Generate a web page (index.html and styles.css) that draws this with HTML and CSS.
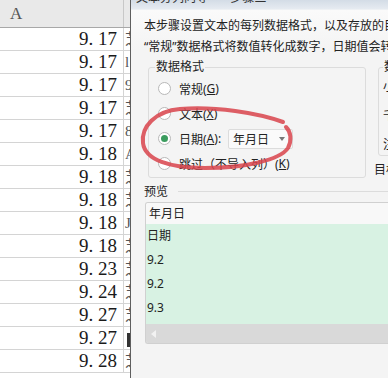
FILE: index.html
```html
<!DOCTYPE html>
<html lang="zh-CN">

<head>
    <meta charset="UTF-8">
    <meta name="viewport" content="width=device-width, initial-scale=1.0">
    <title>文本分列向导</title>
    <link rel="stylesheet" href="styles.css">
</head>

<body>
    <div class="screen">
        <div class="sheet">
            <div class="head">
                <div class="colA">A</div>
                <div class="colB"></div>
            </div>
            <div class="row"><div class="cellA">9. 17</div><div class="cellB">芝</div></div>
            <div class="row"><div class="cellA">9. 17</div><div class="cellB">l</div></div>
            <div class="row"><div class="cellA">9. 17</div><div class="cellB">9</div></div>
            <div class="row"><div class="cellA">9. 17</div><div class="cellB">芝</div></div>
            <div class="row"><div class="cellA">9. 17</div><div class="cellB">8</div></div>
            <div class="row"><div class="cellA">9. 18</div><div class="cellB">A</div></div>
            <div class="row"><div class="cellA">9. 18</div><div class="cellB">芝</div></div>
            <div class="row"><div class="cellA">9. 18</div><div class="cellB">芝</div></div>
            <div class="row"><div class="cellA">9. 18</div><div class="cellB">J</div></div>
            <div class="row"><div class="cellA">9. 18</div><div class="cellB">芝</div></div>
            <div class="row"><div class="cellA">9. 23</div><div class="cellB">芝</div></div>
            <div class="row"><div class="cellA">9. 24</div><div class="cellB">芝</div></div>
            <div class="row"><div class="cellA">9. 27</div><div class="cellB">芝</div></div>
            <div class="row"><div class="cellA">9. 27</div><div class="cellB"><span class="bar"></span></div></div>
            <div class="row"><div class="cellA">9. 28</div><div class="cellB">芝</div></div>
        </div>

        <div class="dialog">
            <div class="titlebar"><span>文本分列向导   -   步骤三</span></div>
            <div class="content">
                <p class="intro">本步骤设置文本的每列数据格式，以及存放的目标区域。<br>“常规”数据格式将数值转化成数字，日期值会转换成日期，其余数据则转换成文本。</p>

                <div class="groups">
                    <fieldset class="format">
                        <legend>数据格式</legend>
                        <div class="opt"><span class="radio"></span>常规(<u>G</u>)</div>
                        <div class="opt"><span class="radio"></span>文本(<u>X</u>)</div>
                        <div class="opt"><span class="radio on"></span>日期(<u>A</u>):
                            <span class="select">年月日<span class="caret"></span></span>
                        </div>
                        <div class="opt"><span class="radio"></span>跳过（不导入列）(<u>K</u>)</div>
                    </fieldset>
                    <div class="side">
                        <fieldset class="extra">
                            <legend>数字分隔符</legend>
                            <div class="item">小数分隔符</div>
                            <div class="item">千位分隔符</div>
                            <div class="item">注意</div>
                        </fieldset>
                        <div class="target">目标区域(<u>E</u>)</div>
                    </div>
                </div>

                <div class="preview-label">预览</div>
                <div class="preview">
                    <div class="ph">年月日</div>
                    <div class="rows">
                        <div class="pr">日期</div>
                        <div class="pr">9.2</div>
                        <div class="pr">9.2</div>
                        <div class="pr">9.3</div>
                    </div>
                    <div class="scroll"><span class="arrow"></span></div>
                </div>
            </div>
        </div>

        <!-- hand drawn red circle over the dialog -->
        <svg class="mark" width="388" height="378" viewBox="0 0 388 378">
            <path d="M283,122 C258,113 215,106 180,109 C155,111 141,127 143,143 C145,160 170,168 205,168 C245,168 280,160 288,148 C292,140 291,132 286,127"
                fill="none" stroke="#d8434b" stroke-width="4" stroke-linecap="round" opacity="0.85" />
        </svg>
    </div>
</body>

</html>
```

FILE: styles.css
```css
*{
    margin: 0;
    padding: 0;
    box-sizing: border-box;
}
body{
    width: 388px;
    height: 378px;
    overflow: hidden;
    background: #fff;
}
.screen{
    position: relative;
    display: flex;
    width: 388px;
    height: 378px;
    overflow: hidden;
}

/* spreadsheet */
.sheet{
    width: 130px;
    flex: none;
    background: #fff;
}
.head{
    display: flex;
    height: 28px;
    background: #e9e9e9;
    border-bottom: 1px solid #a8a8a8;
}
.colA{
    width: 124px;
    border-right: 1px solid #c8c8c8;
    padding-left: 10px;
    font-family: "Liberation Serif", serif;
    font-size: 17px;
    line-height: 27px;
    color: #555;
}
.row{
    display: flex;
    height: 23px;
    border-bottom: 1px solid #d4d4d4;
}
.cellA{
    width: 124px;
    border-right: 1px solid #d4d4d4;
    padding-right: 6px;
    text-align: right;
    font-family: "Liberation Serif", serif;
    font-size: 19px;
    line-height: 22px;
    color: #1a1a1a;
}
.cellB{
    width: 6px;
    overflow: hidden;
    padding-left: 1px;
    font-family: "Liberation Serif", "Noto Sans CJK SC", serif;
    font-size: 15px;
    line-height: 22px;
    color: #555;
    white-space: nowrap;
}
.bar{
    display: inline-block;
    width: 3px;
    height: 14px;
    margin-left: 2px;
    vertical-align: middle;
    background: #333;
}

/* dialog */
.dialog{
    flex: 1;
    display: flex;
    flex-direction: column;
    border-left: 1px solid #5e5e5e;
    background: #f4f4f4;
    font-family: "Noto Sans", "Noto Sans CJK SC", sans-serif;
    color: #222;
    overflow: hidden;
}
.titlebar{
    height: 10px;
    flex: none;
    overflow: hidden;
    padding-left: 5px;
    background: linear-gradient(#d3dce6, #e6ebf1);
    border-bottom: 1px solid #eef1f4;
}
.titlebar span{
    display: block;
    margin-top: -10px;
    font-size: 12px;
    line-height: 16px;
    color: #333;
    white-space: pre;
}
.content{
    padding: 5px 0 0 13px;
    background: linear-gradient(#fafafa, #f4f4f4 40px);
    flex: 1;
}
.intro{
    font-size: 12px;
    line-height: 21px;
    white-space: nowrap;
}
.groups{
    display: flex;
    gap: 12px;
    margin: 2px 0 0 4px;
}
fieldset{
    border: 1px solid #dcdcdc;
    border-radius: 3px;
}
legend{
    font-size: 12px;
    line-height: 16px;
    padding: 0 1px;
    color: #222;
}
.format{
    width: 218px;
    flex: none;
    padding: 0 0 0 6px;
}
.opt{
    display: flex;
    align-items: center;
    height: 25px;
    font-size: 12px;
    white-space: nowrap;
}
.opt:first-of-type{
    margin-top: 1px;
}
.radio{
    width: 13px;
    height: 13px;
    margin: 0 8px 0 3px;
    border: 1px solid #b8b8b8;
    border-radius: 50%;
    background: #fff;
    display: flex;
    align-items: center;
    justify-content: center;
}
.radio.on::after{
    content: "";
    width: 7px;
    height: 7px;
    border-radius: 50%;
    background: #3b9c5e;
}
.select{
    display: inline-flex;
    align-items: center;
    gap: 10px;
    height: 20px;
    margin-left: 7px;
    padding: 0 7px 0 4px;
    border: 1px solid #dcdcdc;
    border-radius: 2px;
    background: #fafafa;
}
.caret{
    width: 0;
    height: 0;
    border-left: 3px solid transparent;
    border-right: 3px solid transparent;
    border-top: 4px solid #777;
}
.side{
    display: flex;
    flex-direction: column;
    width: 80px;
    flex: none;
}
.extra{
    padding: 4px 0 2px 4px;
}
.item{
    font-size: 12px;
    line-height: 16px;
    white-space: nowrap;
    margin-bottom: 13px;
}
.item:last-child{
    margin-bottom: 0;
}
.target{
    margin: 6px 0 0 -4px;
    font-size: 12px;
    line-height: 16px;
    white-space: nowrap;
}
.preview-label{
    display: flex;
    align-items: center;
    gap: 10px;
    height: 18px;
    margin-top: 4px;
    font-size: 12px;
}
.preview-label::after{
    content: "";
    flex: 1;
    border-top: 1px solid #dcdcdc;
}
.preview{
    margin: 2px 0 0 1px;
    border: 1px solid #d0d0d0;
    border-right: none;
    border-radius: 3px 0 0 3px;
    overflow: hidden;
    font-size: 12px;
}
.ph{
    height: 21px;
    line-height: 21px;
    padding-left: 3px;
    background: #f8f8f8;
}
.rows{
    background: #d8f2e3;
    padding-bottom: 4px;
}
.pr{
    height: 24px;
    line-height: 24px;
    padding-left: 1px;
}
.scroll{
    display: flex;
    align-items: center;
    height: 19px;
    padding-left: 5px;
    background: #d9d9d9;
}
.arrow{
    width: 0;
    height: 0;
    border-top: 4px solid transparent;
    border-bottom: 4px solid transparent;
    border-right: 5px solid #f2f2f2;
}

.mark{
    position: absolute;
    top: 0;
    left: 0;
    pointer-events: none;
}
```
